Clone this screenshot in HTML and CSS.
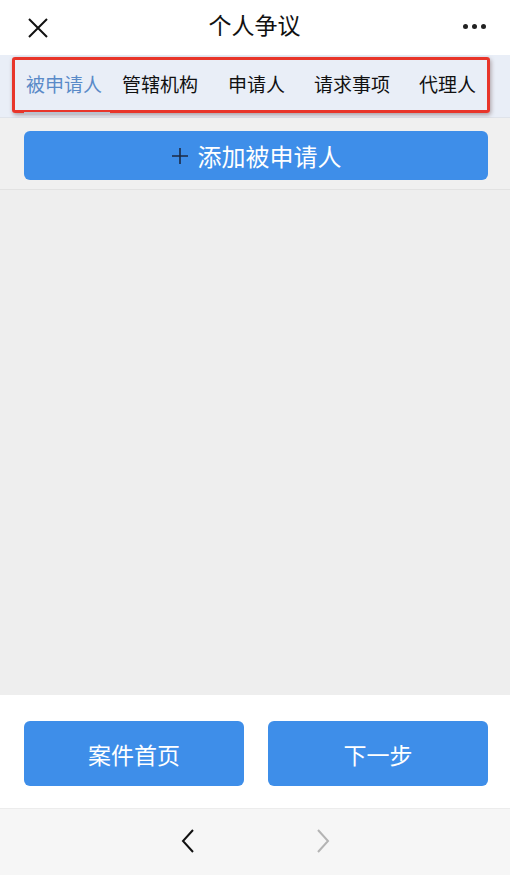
FILE: index.html
```html
<!DOCTYPE html>
<html lang="zh-CN">
<head>
  <meta charset="UTF-8" />
  <meta name="viewport" content="width=device-width, initial-scale=1" />
  <title>个人争议</title>
  <link rel="stylesheet" href="styles.css">
</head>
<body>
  <div class="page">
    <div class="topbar">
      <svg class="close" width="22" height="22" viewBox="0 0 22 22">
        <path d="M2 2 L20 20 M20 2 L2 20" stroke="#111" stroke-width="2" fill="none" />
      </svg>
      <div class="title">个人争议</div>
      <div class="more"><span></span><span></span><span></span></div>
    </div>

    <div class="tabbar">
      <div class="tabs">
        <div class="tab active">被申请人</div>
        <div class="tab">管辖机构</div>
        <div class="tab">申请人</div>
        <div class="tab">请求事项</div>
        <div class="tab">代理人</div>
      </div>
    </div>

    <div class="content">
      <div class="add-row">
        <button class="btn add">
          <svg class="plus" width="18" height="18" viewBox="0 0 18 18">
            <path d="M9 1 V17 M1 9 H17" stroke="#1c2a44" stroke-width="1.6" fill="none" />
          </svg>
          添加被申请人
        </button>
      </div>
    </div>

    <div class="actions">
      <button class="btn">案件首页</button>
      <button class="btn">下一步</button>
    </div>

    <div class="navbar">
      <svg width="16" height="26" viewBox="0 0 16 26">
        <path d="M13 2 L3 13 L13 24" stroke="#111" stroke-width="2" fill="none" />
      </svg>
      <svg width="16" height="26" viewBox="0 0 16 26">
        <path d="M3 2 L13 13 L3 24" stroke="#b4b4b4" stroke-width="2" fill="none" />
      </svg>
    </div>
  </div>
</body>
</html>
```

FILE: styles.css
```css
* {
  box-sizing: border-box;
}

body {
  margin: 0;
  font-family: "Noto Sans CJK SC", "Noto Sans", sans-serif;
  background: #fff;
}

.page {
  width: 510px;
  height: 875px;
  display: flex;
  flex-direction: column;
}

.topbar {
  height: 55px;
  display: grid;
  grid-template-columns: 1fr auto 1fr;
  align-items: center;
  padding: 0 24px 0 27px;
  background: #fff;
}

.title {
  font-size: 23px;
  color: #111;
  padding-bottom: 8px;
  margin-right: 4px;
}

.more {
  justify-self: end;
  display: flex;
  gap: 4px;
  padding-bottom: 2px;
}

.more span {
  width: 5px;
  height: 5px;
  border-radius: 50%;
  background: #222;
}

.tabbar {
  height: 63px;
  background: #e9eef7;
  padding: 2px 20px 4px 12px;
  border-bottom: 1px solid #dfe3ea;
}

.tabs {
  height: 100%;
  display: flex;
  align-items: center;
  gap: 29px;
  padding: 0 11px;
  border: 3px solid #e8352a;
  border-radius: 3px;
  box-shadow: 1px 2px 4px rgba(90, 60, 60, 0.45);
}

.tab {
  font-size: 19px;
  color: #111;
  padding-bottom: 4px;
  position: relative;
}

.tab:first-child {
  margin-right: -9px;
}

.tab:nth-child(2) {
  margin-right: 1px;
}

.tab.active {
  color: #5a8ac8;
}

.tab.active::after {
  content: "";
  position: absolute;
  left: -2px;
  right: -8px;
  bottom: -13px;
  height: 2px;
  background: #b9c2cf;
}

.content {
  flex: 1;
  background: #eeeeee;
}

.add-row {
  padding: 13px 22px 9px 24px;
  border-bottom: 1px solid #e2e2e2;
  background: #f0f0f0;
}

.btn {
  height: 65px;
  border: none;
  border-radius: 6px;
  background: #3e8ee9;
  color: #fff;
  font-family: inherit;
  font-size: 23px;
  cursor: pointer;
}

.btn.add {
  width: 100%;
  height: 49px;
  display: flex;
  align-items: center;
  justify-content: center;
  font-size: 24px;
}

.plus {
  margin-right: 9px;
}

.actions {
  height: 113px;
  display: grid;
  grid-template-columns: 1fr 1fr;
  gap: 24px;
  padding: 26px 22px 22px 24px;
  background: #fff;
}

.navbar {
  height: 67px;
  background: #f6f6f6;
  border-top: 1px solid #ececec;
  display: flex;
  align-items: center;
  justify-content: center;
  gap: 119px;
  padding-bottom: 2px;
}
```
